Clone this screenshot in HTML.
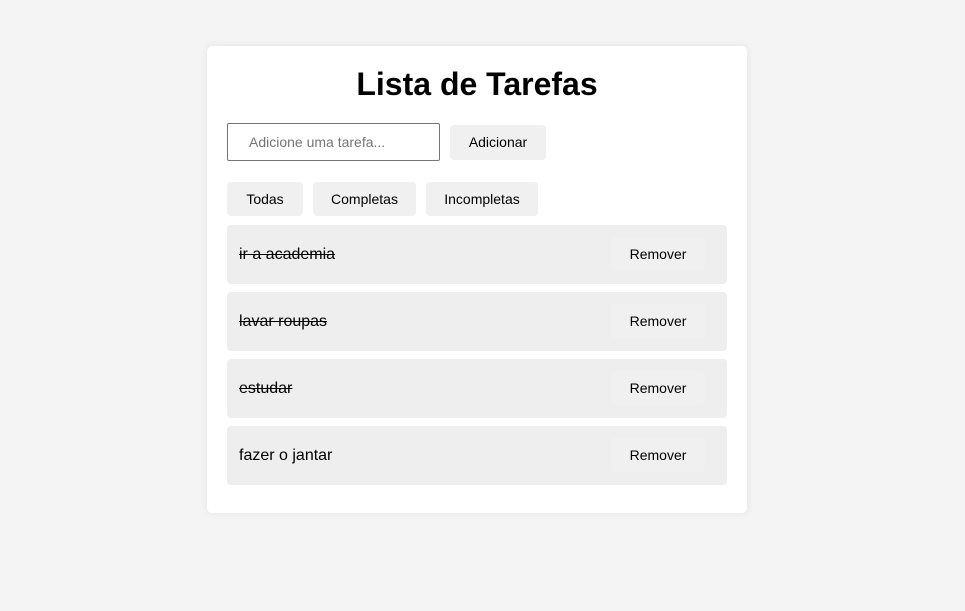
<!DOCTYPE html>
<html><head><style>
body{margin:0;background:#f4f4f4;font-family:"Liberation Sans",Arial,sans-serif;width:965px;height:611px;position:relative;overflow:hidden}
.card{position:absolute;left:207px;top:46px;width:540px;height:467px;background:#fff;border-radius:5px;box-shadow:0 0 8px rgba(0,0,0,0.08)}
h1{position:absolute;left:0;width:540px;top:19px;margin:0;text-align:center;font-size:32px;font-weight:bold;line-height:38px}
.abs{position:absolute;box-sizing:border-box}
.inp{left:20px;top:77px;width:213px;height:38px;border:1px solid #767676;border-radius:2px;font-size:14px;color:#757575;padding-left:21px;line-height:36px}
.btn{background:#f0f0f0;border-radius:4px;font-size:14px;text-align:center;color:#000}
.item{left:20px;width:500px;height:59px;background:#eee;border-radius:4px}
.item span{position:absolute;left:12px;top:0;line-height:59px;font-size:16px}
.item .s{text-decoration:line-through}
.rm{position:absolute;left:384px;top:12px;width:94px;height:34px;line-height:34px;background:#f0f0f0;border-radius:4px;font-size:14px;text-align:center}
</style></head><body>
<div class="card">
<h1>Lista de Tarefas</h1>
<div class="abs inp">Adicione uma tarefa...</div>
<div class="abs btn" style="left:243px;top:79px;width:96px;height:35px;line-height:35px">Adicionar</div>
<div class="abs btn" style="left:20px;top:136px;width:76px;height:34px;line-height:34px">Todas</div>
<div class="abs btn" style="left:106px;top:136px;width:103px;height:34px;line-height:34px">Completas</div>
<div class="abs btn" style="left:219px;top:136px;width:112px;height:34px;line-height:34px">Incompletas</div>
<div class="abs item" style="top:179px"><span class="s">ir a academia</span><div class="rm">Remover</div></div>
<div class="abs item" style="top:246px"><span class="s">lavar roupas</span><div class="rm">Remover</div></div>
<div class="abs item" style="top:313px"><span class="s">estudar</span><div class="rm">Remover</div></div>
<div class="abs item" style="top:380px"><span>fazer o jantar</span><div class="rm">Remover</div></div>
</div>
</body></html>
